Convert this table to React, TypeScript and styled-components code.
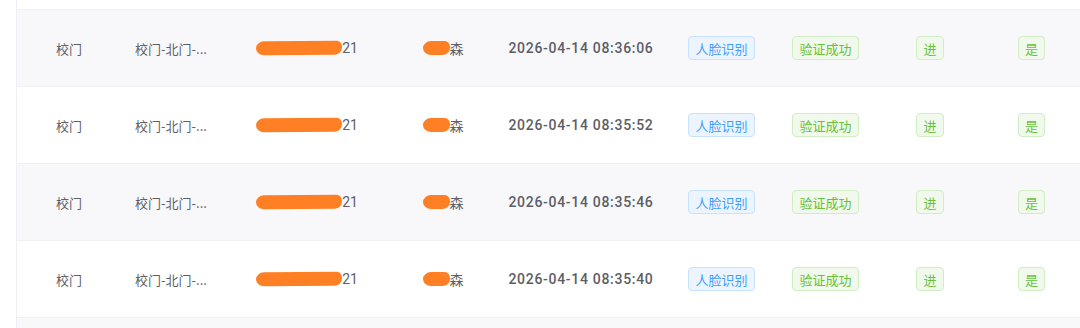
import React from "react";
import styled, { createGlobalStyle } from "styled-components";

const GlobalStyle = createGlobalStyle`
  html, body {
    margin: 0;
    padding: 0;
    background: #ffffff;
  }
  body {
    font-family: "Roboto", "Noto Sans CJK SC", sans-serif;
    -webkit-font-smoothing: antialiased;
  }
`;

const Page = styled.div`
  width: 1080px;
  height: 328px;
  overflow: hidden;
  padding-left: 16px;
  box-sizing: border-box;
  background: #ffffff;
`;

const Table = styled.div`
  border-left: 1px solid #eef0f5;
  height: 100%;
`;

const COLUMNS = "104px 100px 172px 100px 176px 105px 103px 106px 97px";

const ClippedRow = styled.div<{ $striped?: boolean; $height: number }>`
  height: ${(p) => p.$height}px;
  background: ${(p) => (p.$striped ? "#f8f8fb" : "#ffffff")};
  border-bottom: 1px solid #f0f1f5;
`;

const Row = styled.div<{ $striped: boolean }>`
  display: grid;
  grid-template-columns: ${COLUMNS};
  height: 76px;
  align-items: center;
  background: ${(p) => (p.$striped ? "#f8f8fb" : "#ffffff")};
  border-bottom: 1px solid #f0f1f5;
`;

const Cell = styled.div`
  display: flex;
  justify-content: center;
  align-items: center;
  padding: 0 6px;
  min-width: 0;
  font-size: 13px;
  color: #5f6066;
  white-space: nowrap;
`;

const Plain = styled.span`
  font-family: "Noto Sans CJK SC", sans-serif;
`;

const Masked = styled.span`
  display: inline-flex;
  align-items: center;
  font-family: "Roboto", "Noto Sans CJK SC", sans-serif;
  font-size: 14px;
`;

const Redaction = styled.span<{ $w: number }>`
  display: inline-block;
  width: ${(p) => p.$w}px;
  height: 14px;
  background: #ff8024;
  border-radius: 8px 5px 7px 8px / 7px 6px 7px 7px;
  transform: rotate(-0.5deg);
`;

const DateText = styled.span`
  font-family: "Roboto", sans-serif;
  font-size: 14px;
  font-weight: 500;
  letter-spacing: 0.7px;
  color: #5c5e66;
`;

const Tag = styled.span<{ $type: "primary" | "success" }>`
  display: inline-flex;
  align-items: center;
  box-sizing: border-box;
  height: 24px;
  padding: 0 6px;
  border-radius: 4px;
  font-family: "Noto Sans CJK SC", sans-serif;
  font-size: 13px;
  line-height: 1;
  border: 1px solid ${(p) => (p.$type === "primary" ? "#c6e2ff" : "#d1edc4")};
  background: ${(p) => (p.$type === "primary" ? "#ecf5ff" : "#f0f9eb")};
  color: ${(p) => (p.$type === "primary" ? "#409eff" : "#67c23a")};
`;

const records = [
  { time: "2026-04-14 08:36:06" },
  { time: "2026-04-14 08:35:52" },
  { time: "2026-04-14 08:35:46" },
  { time: "2026-04-14 08:35:40" },
];

export default function App() {
  return (
    <Page>
      <GlobalStyle />
      <Table>
        <ClippedRow $height={9} />
        {records.map((r, i) => (
          <Row key={r.time} $striped={i % 2 === 0}>
            <Cell>
              <Plain>校门</Plain>
            </Cell>
            <Cell>
              <Plain>校门-北门-...</Plain>
            </Cell>
            <Cell>
              <Masked>
                <Redaction $w={86} />
                21
              </Masked>
            </Cell>
            <Cell>
              <Masked>
                <Redaction $w={27} />
                <Plain>森</Plain>
              </Masked>
            </Cell>
            <Cell>
              <DateText>{r.time}</DateText>
            </Cell>
            <Cell>
              <Tag $type="primary">人脸识别</Tag>
            </Cell>
            <Cell>
              <Tag $type="success">验证成功</Tag>
            </Cell>
            <Cell>
              <Tag $type="success">进</Tag>
            </Cell>
            <Cell>
              <Tag $type="success">是</Tag>
            </Cell>
          </Row>
        ))}
        <ClippedRow $height={20} $striped />
      </Table>
    </Page>
  );
}
